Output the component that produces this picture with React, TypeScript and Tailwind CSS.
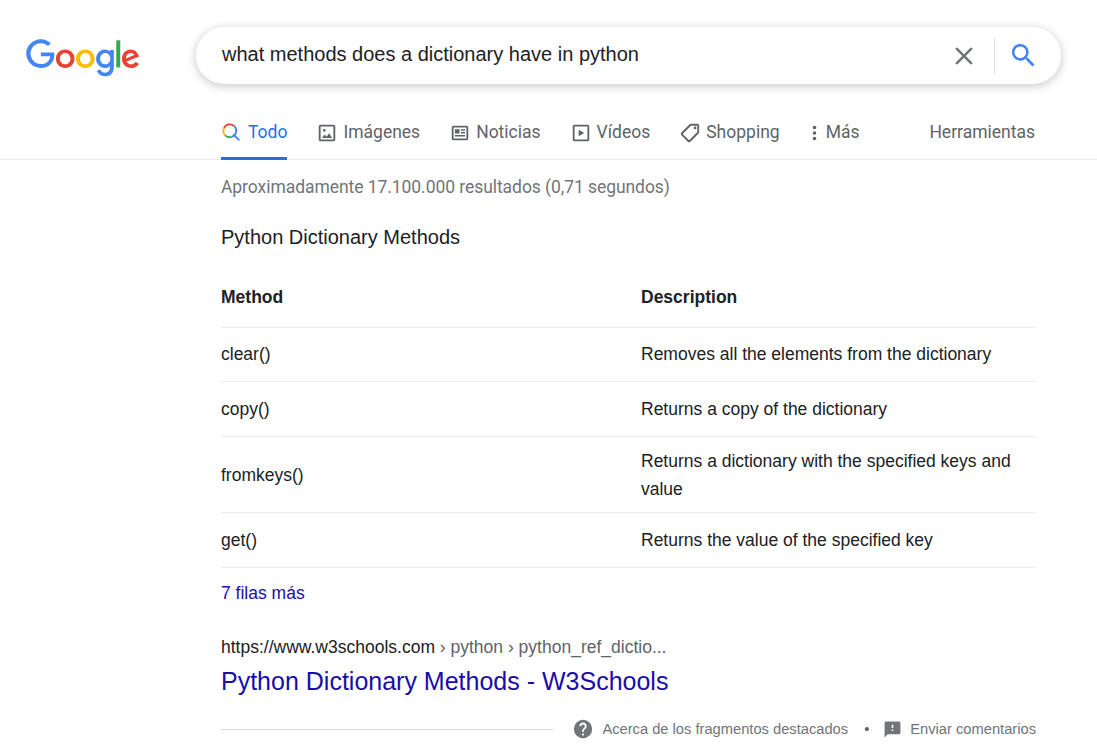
import React from 'react';

const GoogleLogo = () => (
  <svg viewBox="0 0 272 92" className="w-[114px] h-[38.5px] shrink-0">
    <path fill="#EA4335" d="M115.75 47.18c0 12.77-9.99 22.18-22.25 22.18s-22.25-9.41-22.25-22.18C71.25 34.32 81.24 25 93.5 25s22.25 9.32 22.25 22.18zm-9.74 0c0-7.98-5.79-13.44-12.51-13.44S80.99 39.2 80.99 47.18c0 7.9 5.79 13.44 12.51 13.44s12.51-5.55 12.51-13.44z" />
    <path fill="#FBBC05" d="M163.75 47.18c0 12.77-9.99 22.18-22.25 22.18s-22.25-9.41-22.25-22.18c0-12.85 9.99-22.18 22.25-22.18s22.25 9.32 22.25 22.18zm-9.74 0c0-7.98-5.79-13.44-12.51-13.44s-12.51 5.46-12.51 13.44c0 7.9 5.79 13.44 12.51 13.44s12.51-5.55 12.51-13.44z" />
    <path fill="#4285F4" d="M209.75 26.34v39.82c0 16.38-9.66 23.07-21.08 23.07-10.75 0-17.22-7.19-19.66-13.07l8.48-3.53c1.51 3.61 5.21 7.87 11.17 7.87 7.31 0 11.84-4.51 11.84-13v-3.19h-.34c-2.18 2.69-6.38 5.04-11.68 5.04-11.09 0-21.25-9.66-21.25-22.09 0-12.52 10.16-22.26 21.25-22.26 5.29 0 9.49 2.35 11.68 4.96h.34v-3.61h9.25zm-8.56 20.92c0-7.81-5.21-13.52-11.84-13.52-6.72 0-12.35 5.71-12.35 13.52 0 7.73 5.63 13.36 12.35 13.36 6.63 0 11.84-5.63 11.84-13.36z" />
    <path fill="#34A853" d="M225 3v65h-9.5V3h9.5z" />
    <path fill="#EA4335" d="M262.02 54.48l7.56 5.04c-2.44 3.61-8.32 9.83-18.48 9.83-12.6 0-22.01-9.74-22.01-22.18 0-13.19 9.49-22.18 20.92-22.18 11.51 0 17.14 9.16 18.98 14.11l1.01 2.52-29.65 12.28c2.27 4.45 5.8 6.72 10.75 6.72 4.96 0 8.4-2.44 10.92-6.14zm-23.27-7.98l19.82-8.23c-1.09-2.77-4.37-4.7-8.23-4.7-4.95 0-11.84 4.37-11.59 12.93z" />
    <path fill="#4285F4" d="M35.29 41.41V32H67c.31 1.64.47 3.58.47 5.68 0 7.06-1.93 15.79-8.15 22.01-6.05 6.3-13.78 9.66-24.02 9.66C16.32 69.35.36 53.89.36 34.91.36 15.93 16.32.47 35.3.47c10.5 0 17.98 4.12 23.6 9.49l-6.64 6.64c-4.03-3.78-9.49-6.72-16.97-6.72-13.86 0-24.7 11.17-24.7 25.03 0 13.86 10.84 25.03 24.7 25.03 8.99 0 14.11-3.61 17.39-6.89 2.66-2.66 4.41-6.46 5.1-11.65l-22.49.01z" />
  </svg>
);

const ColorSearch = () => (
  <svg viewBox="0 0 24 24" className="w-[20px] h-[20px] shrink-0" fill="none" strokeWidth="2.2">
    <path stroke="#4285F4" d="M15 15l7 7" />
    <path stroke="#EA4335" d="M3.6 7.5A7.6 7.6 0 0 1 16 5" />
    <path stroke="#FBBC05" d="M3.6 7.5A7.6 7.6 0 0 0 5 16" />
    <path stroke="#34A853" d="M5 16a7.6 7.6 0 0 0 8 1.7" />
    <path stroke="#4285F4" d="M13 17.7A7.6 7.6 0 0 0 16 5" />
  </svg>
);

const TabIcon = ({ d, flip }: { d: string; flip?: boolean }) => (
  <svg viewBox="0 0 24 24" className="w-[22px] h-[22px] shrink-0" fill="#5f6368">
    <path d={d} transform={flip ? 'translate(24 0) scale(-1 1)' : undefined} />
  </svg>
);

const imageIcon = 'M19 3H5c-1.1 0-2 .9-2 2v14c0 1.1.9 2 2 2h14c1.1 0 2-.9 2-2V5c0-1.1-.9-2-2-2zm0 16H5V5h14v14zM6.5 17.5l3-3.9 2 2.4 2.8-3.6 3.2 5.1zM9 7.5a1.5 1.5 0 1 1 0 3 1.5 1.5 0 0 1 0-3z';
const newsIcon = 'M19 4H5c-1.1 0-2 .9-2 2v12c0 1.1.9 2 2 2h14c1.1 0 2-.9 2-2V6c0-1.1-.9-2-2-2zm0 14H5V6h14v12zM6.5 8h5v4.5h-5zM13 8h4.5v1.6H13zM13 11h4.5v1.6H13zM6.5 14.2h11v1.6h-11z';
const videoIcon = 'M19 3H5c-1.1 0-2 .9-2 2v14c0 1.1.9 2 2 2h14c1.1 0 2-.9 2-2V5c0-1.1-.9-2-2-2zm0 16H5V5h14v14zM9.5 8.5v7l6-3.5z';
const tagIcon = 'M21.41 11.58l-9-9C12.05 2.22 11.55 2 11 2H4c-1.1 0-2 .9-2 2v7c0 .55.22 1.05.59 1.42l9 9c.36.36.86.58 1.41.58s1.05-.22 1.41-.59l7-7c.37-.36.59-.86.59-1.41s-.23-1.06-.59-1.42zM13 20.01L4 11V4h7v-.01l9 9-7 7.02zM6.5 5A1.5 1.5 0 1 1 6.5 8a1.5 1.5 0 0 1 0-3z';

const Tab = ({ icon, label }: { icon: React.ReactNode; label: string }) => (
  <div className="flex items-center gap-[5px] h-[53px] text-[#5f6368]">
    {icon}
    <span>{label}</span>
  </div>
);

const rows = [
  { method: 'clear()', desc: 'Removes all the elements from the dictionary', h: 'h-[54px] pb-[1px]' },
  { method: 'copy()', desc: 'Returns a copy of the dictionary', h: 'h-[55px]' },
  { method: 'fromkeys()', desc: 'Returns a dictionary with the specified keys and value', h: 'h-[76px] pt-[1px]' },
  { method: 'get()', desc: 'Returns the value of the specified key', h: 'h-[55px]' },
];

export default function App() {
  return (
    <div className="h-[751px] overflow-hidden bg-white font-['Liberation_Sans',sans-serif] text-[#202124]">
      {/* Header */}
      <header className="flex items-start pl-[26px] pt-[27px] h-[106px]">
        <div className="w-[170px] pt-[12px]">
          <GoogleLogo />
        </div>
        <div className="flex items-center w-[865px] h-[57px] rounded-[28px] pl-[26px] pr-[22px] shadow-[0_2px_8px_1px_rgba(64,60,67,0.24)]">
          <div className="flex-1 text-[20px] -mt-[3px]">what methods does a dictionary have in python</div>
          <svg viewBox="0 0 24 24" className="w-[30px] h-[30px] mr-[15px]" fill="#70757a">
            <path d="M19 6.41L17.59 5 12 10.59 6.41 5 5 6.41 10.59 12 5 17.59 6.41 19 12 13.41 17.59 19 19 17.59 13.41 12z" />
          </svg>
          <div className="w-px h-[36px] bg-[#dfe1e5] mr-[13px]" />
          <svg viewBox="0 0 24 24" className="w-[31px] h-[31px] -mt-[1px]" fill="#4285f4">
            <path d="M15.5 14h-.79l-.28-.27A6.471 6.471 0 0 0 16 9.5 6.5 6.5 0 1 0 9.5 16c1.61 0 3.09-.59 4.23-1.57l.27.28v.79l5 4.99L20.49 19l-4.99-5zm-6 0C7.01 14 5 11.99 5 9.5S7.01 5 9.5 5 14 7.01 14 9.5 11.99 14 9.5 14z" />
          </svg>
        </div>
      </header>

      {/* Tabs */}
      <nav className="flex items-start pl-[221px] pr-[62px] border-b border-[#e8eaed] h-[54px] font-['Roboto',sans-serif] text-[17.5px]">
        <div className="flex items-center gap-[7px] h-[54px] pt-[1px] border-b-[3px] border-[#1a73e8] text-[#1a73e8] mr-[29px]">
          <ColorSearch />
          <span>Todo</span>
        </div>
        <div className="flex gap-[29px]">
          <Tab icon={<TabIcon d={imageIcon} />} label="Imágenes" />
          <Tab icon={<TabIcon d={newsIcon} />} label="Noticias" />
          <Tab icon={<TabIcon d={videoIcon} />} label="Vídeos" />
          <Tab icon={<TabIcon d={tagIcon} flip />} label="Shopping" />
          <div className="flex items-center gap-[6px] h-[53px] text-[#5f6368]">
            <svg viewBox="0 0 12 24" className="w-[11px] h-[22px] shrink-0" fill="#5f6368">
              <path d="M6 8a2 2 0 1 0 0-4 2 2 0 0 0 0 4zm0 2a2 2 0 1 0 0 4 2 2 0 0 0 0-4zm0 6a2 2 0 1 0 0 4 2 2 0 0 0 0-4z" />
            </svg>
            <span>Más</span>
          </div>
        </div>
        <div className="ml-auto flex items-center h-[53px] text-[#5f6368]">Herramientas</div>
      </nav>

      <main className="pl-[221px] pr-[61px]">
        <p className="font-['Roboto',sans-serif] text-[17.5px] tracking-[-0.06px] text-[#70757a] pt-[15px] leading-[24px]">
          Aproximadamente 17.100.000 resultados (0,71 segundos)
        </p>
        <h2 className="text-[20px] leading-[26px] pt-[25px] mt-0">Python Dictionary Methods</h2>

        {/* Snippet table */}
        <div className="mt-[19px] text-[17.5px]">
          <div className="flex items-center h-[59px] pb-[2px] border-b border-[#e8eaed] font-bold">
            <div className="w-[420px]">Method</div>
            <div className="flex-1">Description</div>
          </div>
          {rows.map((row) => (
            <div key={row.method} className={`flex items-center border-b border-[#e8eaed] leading-[28px] ${row.h}`}>
              <div className="w-[420px]">{row.method}</div>
              <div className="flex-1">{row.desc}</div>
            </div>
          ))}
        </div>

        <div className="pt-[13px] text-[17.5px] leading-[24px] text-[#1a0dab]">7 filas más</div>

        <div className="pt-[30px] text-[17.5px] leading-[24px] text-[#5f6368]">
          <span className="text-[#202124]">https://www.w3schools.com</span> › python › python_ref_dictio...
        </div>
        <div className="pt-[7px] text-[25px] leading-[30px] text-[#1a0dab]">Python Dictionary Methods - W3Schools</div>

        <div className="flex items-center mt-[22px] text-[14.7px] text-[#70757a]">
          <div className="flex-1 h-px bg-[#dadce0] mr-[18px]" />
          <svg viewBox="0 0 24 24" className="w-[22px] h-[22px] mr-[8px]" fill="#70757a">
            <path d="M12 2a10 10 0 1 0 0 20 10 10 0 0 0 0-20zm1 17h-2v-2h2v2zm2.07-7.75l-.9.92C13.45 12.9 13 13.5 13 15h-2v-.5c0-1.1.45-2.1 1.17-2.83l1.24-1.26c.37-.36.59-.86.59-1.41 0-1.1-.9-2-2-2s-2 .9-2 2H8c0-2.21 1.79-4 4-4s4 1.79 4 4c0 .88-.36 1.68-.93 2.25z" />
          </svg>
          <span>Acerca de los fragmentos destacados</span>
          <span className="ml-[16px] mr-[14px] text-[#5f6368]">•</span>
          <svg viewBox="0 0 24 24" className="w-[19px] h-[19px] mr-[8px]" fill="#70757a">
            <path d="M20 2H4c-1.1 0-2 .9-2 2v18l4-4h14c1.1 0 2-.9 2-2V4c0-1.1-.9-2-2-2zm-7 12h-2v-2h2v2zm0-4h-2V6h2v4z" />
          </svg>
          <span>Enviar comentarios</span>
        </div>
      </main>
    </div>
  );
}
